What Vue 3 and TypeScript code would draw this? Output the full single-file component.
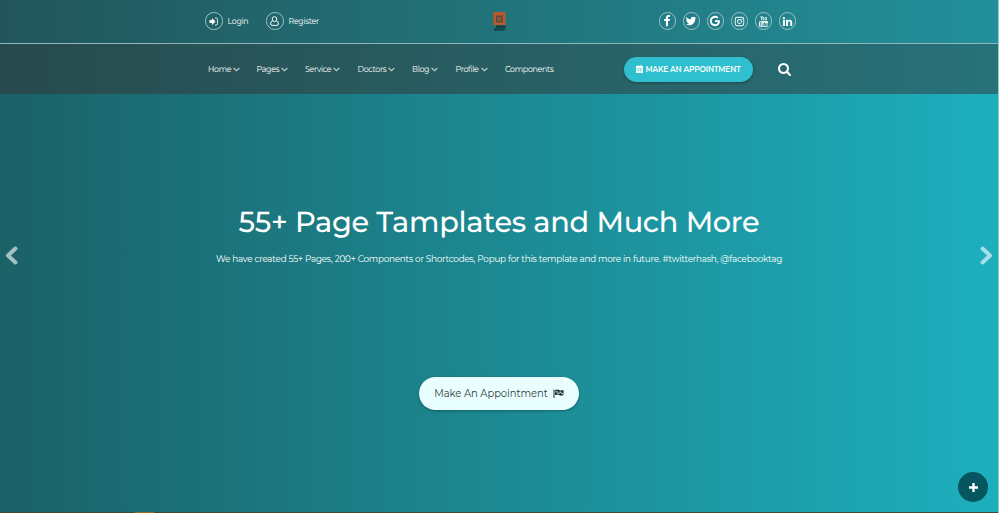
<script setup lang="ts">
interface NavItem { label: string; menu: boolean }
interface Social { name: string; path: string; size: number }

const nav: NavItem[] = [
  { label: 'Home', menu: true },
  { label: 'Pages', menu: true },
  { label: 'Service', menu: true },
  { label: 'Doctors', menu: true },
  { label: 'Blog', menu: true },
  { label: 'Profile', menu: true },
  { label: 'Components', menu: false },
]

const socials: Social[] = [
  { name: 'Facebook', size: 12, path: 'M1343 12v264h-157q-86 0-116 36t-30 108v189h293l-39 296h-254v759h-306v-759h-255v-296h255v-218q0-186 104-288.5t277-102.5q147 0 228 12z' },
  { name: 'Twitter', size: 12, path: 'M1684 408q-67 98-162 167 1 14 1 42 0 130-38 259.5t-115.5 248.5-184.5 210.5-258 146-323 54.5q-271 0-496-145 35 4 78 4 225 0 401-138-105-2-188-64.5t-114-159.5q33 5 61 5 43 0 85-11-112-23-185.5-111.5t-73.5-205.5v-4q68 38 146 41-66-44-105-115t-39-154q0-88 44-163 121 149 294.5 238.5t371.5 99.5q-8-38-8-74 0-134 94.5-228.5t228.5-94.5q140 0 236 102 109-21 205-78-37 115-142 178 93-10 186-50z' },
  { name: 'Google', size: 12, path: 'M896 786h725q12 67 12 128 0 217-91 387.5t-259.5 266.5-386.5 96q-157 0-299-60.5t-245-163.5-163.5-245-60.5-299 60.5-299 163.5-245 245-163.5 299-60.5q300 0 515 201l-209 201q-123-119-306-119-129 0-238.5 65t-173.5 176.5-64 243.5 64 243.5 173.5 176.5 238.5 65q87 0 160-24t120-60 82-82 51.5-87 22.5-78h-436v-264z' },
  { name: 'Instagram', size: 11, path: 'M520 128h752q392 0 392 392v752q0 392-392 392H520q-392 0-392-392V520q0-392 392-392zm0 150q-242 0-242 242v752q0 242 242 242h752q242 0 242-242V520q0-242-242-242zM896 502a394 394 0 1 1 0 788a394 394 0 1 1 0-788zm0 142a252 252 0 1 0 0 504a252 252 0 1 0 0-504zM1306 394a92 92 0 1 1 0 184a92 92 0 1 1 0-184z' },
  { name: 'YouTube', size: 11, path: 'M380 0h120l75 270L650 0h120L630 410v290H515V410zM890 170q140 0 140 150v240q0 150-140 150T750 560V320q0-150 140-150zm0 100q-40 0-40 60v220q0 60 40 60t40-60V330q0-60-40-60zM1130 180h105v390q0 40 30 40t60-45V180h105v520h-105v-55q-55 65-115 65-80 0-80-110zM370 800h1052q220 0 220 220v520q0 220-220 220H370q-220 0-220-220v-520q0-220 220-220zM260 950v110h120v570h115v-570h120V950zM620 1140v380q0 120 80 120 60 0 110-60v50h100v-490H810v370q-30 40-60 40t-30-40v-370zM980 950v680h100v-45q45 55 100 55 110 0 110-140v-210q0-160-110-160-55 0-100 55V950zm100 290q50-55 90 0v260q-40 55-90 0zM1460 1130q-130 0-130 150v210q0 150 130 150t130-150v-50h-100v50q0 60-30 60t-30-60v-110h160v-100q0-150-130-150zm-30 160q0-70 30-70t30 70z' },
  { name: 'LinkedIn', size: 11, path: 'M477 625v991h-330v-991h330zm21-306q1 73-50.5 122t-135.5 49h-2q-82 0-132-49t-50-122q0-74 51.5-122.5t134.5-48.5 133 48.5 51 122.5zm1166 729v568h-329v-530q0-105-40.5-164.5t-126.5-59.5q-63 0-105.5 34.5t-63.5 85.5q-11 30-11 81v553h-329q2-399 2-647t-1-296l-1-48h329v144h-2q20-32 41-56t56.5-52 87-43.5 114.5-15.5q171 0 275 113.5t104 332.5z' },
]
</script>

<template>
  <div class="page">
    <header>
      <div class="topbar">
        <div class="account">
          <a class="acc login">
            <span class="ring"><svg width="9" height="9" viewBox="0 0 18 18"><path fill="#fff" d="M1 6h5V2l7 7-7 7v-4H1z" /><path d="M12 2h2.500q2.500 0 2.500 2.500v9q0 2.500-2.500 2.500H12" fill="none" stroke="#fff" stroke-width="1.700" /></svg></span>
            <span class="name tall">Login</span>
          </a>
          <a class="acc register">
            <span class="ring"><svg width="9" height="10" viewBox="0 0 18 20"><path d="M9 1.200a4.600 5 0 1 1 0 10a4.600 5 0 1 1 0-10zM5.400 9.500Q1.200 10 1.200 16q0 2.800 2.800 2.800h10q2.800 0 2.800-2.800 0-6-4.200-6.500" fill="none" stroke="#fff" stroke-width="1.900" /></svg></span>
            <span class="name tall">Register</span>
          </a>
        </div>
        <svg class="logo" width="13" height="19" viewBox="0 0 13 19">
          <rect x="0.500" width="12" height="13" fill="#b95a2c" />
          <rect x="3" y="3.500" width="7" height="7" fill="#5f4a42" />
          <rect x="4.500" y="5" width="4" height="4" fill="#8d5237" />
          <rect x="3" y="13.500" width="9.500" height="2.500" fill="#123f46" />
          <path d="M1 17.500h11.500" stroke="#0d3439" stroke-width="2" stroke-dasharray="2.300 .5" />
        </svg>
        <div class="socials">
          <a v-for="s in socials" :key="s.name" class="ring">
            <svg :width="s.size" :height="s.size" viewBox="0 0 1792 1792"><path :d="s.path" fill="#fff" fill-rule="evenodd" /></svg>
          </a>
        </div>
      </div>
      <div class="navbar">
        <nav>
          <a v-for="n in nav" :key="n.label"><span class="tall">{{ n.label }}</span><svg v-if="n.menu" width="7" height="5" viewBox="0 0 7 5"><path d="M.6 1 3.500 3.700 6.400 1" fill="none" stroke="#b5cacc" stroke-width="1.300" /></svg></a>
        </nav>
        <button class="book">
          <svg width="7" height="8" viewBox="0 0 14 16"><path fill="#fff" fill-rule="evenodd" d="M1 2h2V0h2v2h4V0h2v2h2q1 0 1 1v12q0 1-1 1H1q-1 0-1-1V3q0-1 1-1zM1 6v.8h12V6zM4.200 7v8h.7V7zM9 7v8h.7V7zM1 10.500v.8h12v-.8z" /></svg>
          <span class="tall">MAKE AN APPOINTMENT</span>
        </button>
        <svg class="search" width="13" height="13" viewBox="64 128 1664 1664"><path fill="#fff" d="M1216 832q0-185-131.500-316.500t-316.500-131.500-316.500 131.500-131.500 316.500 131.500 316.500 316.500 131.500 316.500-131.500 131.500-316.500zm512 832q0 52-38 90t-90 38q-54 0-90-38l-343-342q-179 124-399 124-143 0-273.500-55.500t-225-150-150-225-55.500-273.500 55.500-273.500 150-225 225-150 273.500-55.500 273.500 55.500 225 150 150 225 55.500 273.500q0 220-124 399l343 343q37 37 37 90z" /></svg>
      </div>
    </header>

    <main>
      <svg class="arrow" width="13" height="19" viewBox="0 0 13 19"><path d="M10.500 2.500 3 9.500l7.500 7" /></svg>
      <section>
        <h1>55+ Page Tamplates and Much More</h1>
        <p class="tall">We have created 55+ Pages, 200+ Components or Shortcodes, Popup for this template and more in future. #twitterhash, @facebooktag</p>
        <button class="cta">
          <span class="tall">Make An Appointment</span>
          <svg width="11" height="9" viewBox="0 0 22 18"><path d="M2 1v17" stroke="#222c2d" stroke-width="2" /><path d="M4 2.500q5-3 9 0 4 1.500 8-1v10q-4 3-8 1-4-3-9 0z" fill="#222c2d" /><path d="M5 4.500q2-1 4-.8v3q2 0 4 1v-3q3 1.500 4 .5v3q2 0 3-1v3q-2 1-3 .8v-3q-2 .8-4-.3v3q-2-1-4-1v-3q-2 0-4 1z" fill="#b8c9c9" /></svg>
        </button>
      </section>
      <svg class="arrow" width="13" height="19" viewBox="0 0 13 19"><path d="M2.500 2.500 10 9.500l-7.500 7" /></svg>
    </main>
    <button class="fab"><svg width="9" height="9" viewBox="0 0 9 9"><path d="M4.500 0v9M0 4.500h9" stroke="#fff" stroke-width="2.400" /></svg></button>
    <div class="baseline"><i></i></div>
  </div>
</template>

<style>
body { margin: 0; overflow: hidden; }
</style>

<style scoped>
* { box-sizing: border-box; }
.page { position: relative; display: flex; flex-direction: column; width: 999px; height: 513px; border-right: 1px solid #8fcbd2; background: linear-gradient(90deg, #1b6168, #1c8992 50%, #1dafbe); color: #fff; font-family: Montserrat, Inter, sans-serif; text-rendering: geometricPrecision; }
svg { display: block; flex: none; }
button { border: 0; padding: 0; margin: 0; font: inherit; color: inherit; }
.tall { transform: scaleY(1.1); }
.topbar { display: grid; grid-template-columns: 288px 1fr 137.500px; height: 44px; padding: 0 202px 1px 205px; align-items: center; background: rgba(51, 51, 51, .25); border-bottom: 1px solid #8eb6bb; }
.account, .acc, .socials { display: flex; align-items: center; }
.acc { gap: 5px; font-size: 7.800px; letter-spacing: -.25px; }
.name { padding-bottom: 1px; }
.login { width: 61px; }
.ring { display: flex; align-items: center; justify-content: center; width: 17.500px; height: 17.500px; flex: none; border: 1px solid #9cc2c6; border-radius: 50%; }
.socials { justify-content: space-between; }
.navbar { display: flex; height: 50px; padding-left: 208px; align-items: center; background: rgba(51, 51, 51, .5); }
nav { display: grid; grid-template-columns: 48.500px 48.500px 52.500px 54.500px 43.500px 49.500px 50px; width: 416px; padding-bottom: 1px; font-size: 7.900px; letter-spacing: -.3px; }
nav a { display: flex; align-items: center; gap: 2px; white-space: nowrap; }
nav svg { margin-top: 2px; }
.book { display: flex; align-items: center; justify-content: center; gap: 2px; width: 129px; height: 25px; border-radius: 13px; background: #30bfce; box-shadow: 0 1px 3px rgba(0, 0, 0, .3); font-size: 7.500px; font-weight: 600; letter-spacing: -.13px; white-space: nowrap; }
.search { margin-left: 24.500px; }
main { display: flex; flex: 1; padding: 0 5px; }
.arrow { margin-top: 152px; }
.arrow path { fill: none; stroke: #fff; stroke-opacity: .6; stroke-width: 4; stroke-linecap: round; stroke-linejoin: round; }
section { display: flex; flex: 1; flex-direction: column; align-items: center; }
h1 { margin: 109px 0 0; font-size: 28.800px; line-height: 40px; font-weight: 500; letter-spacing: -.28px; white-space: nowrap; }
p { margin: 9px 0 0; font-size: 8.800px; line-height: 15px; letter-spacing: -.21px; white-space: nowrap; }
.cta { display: flex; align-items: center; justify-content: center; gap: 5px; width: 160px; height: 33px; margin-top: 110px; border-radius: 17px; background: #e9ffff; box-shadow: 0 1px 3px rgba(0, 0, 0, .3); color: #303c3d; font-size: 10px; letter-spacing: -.05px; white-space: nowrap; }
.fab { position: absolute; right: 10px; bottom: 11px; display: flex; align-items: center; justify-content: center; width: 30px; height: 30px; border-radius: 50%; background: #06565f; }
.baseline { height: 1px; padding-left: 135px; background: #4a4a2b; }
.baseline i { display: block; width: 19px; height: 1px; background: #9b6a2b; }
</style>
